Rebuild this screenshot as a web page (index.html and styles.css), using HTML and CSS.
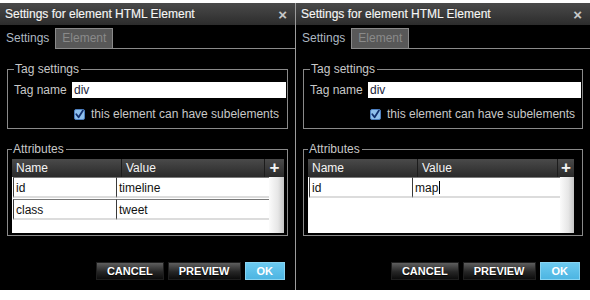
FILE: index.html
```html
<!DOCTYPE html>
<html>
<head>
<meta charset="utf-8">
<link rel="stylesheet" href="styles.css">
</head>
<body>
<div class="screen">
  <div class="dialog">
    <div class="titlebar"><span class="title">Settings for element HTML Element</span><span class="close">×</span></div>
    <div class="tabs"><span class="tab active">Settings</span><span class="tab">Element</span><span class="tab-rest"></span></div>
    <div class="body">
      <fieldset class="group tag-group">
        <legend>Tag settings</legend>
        <div class="field-row"><span class="label">Tag name</span><span class="input">div</span></div>
        <div class="check-row">
          <svg class="checkbox" width="11" height="11" viewBox="0 0 11 11"><rect x="0.5" y="0.5" width="10" height="10" rx="1.5" fill="#8fc0ec" stroke="#4d7fbf"/><path d="M2.3 5.2 L4.6 8.2 L8.9 1.6" fill="none" stroke="#12306e" stroke-width="1.8" stroke-linecap="round" stroke-linejoin="round"/></svg>
          <span>this element can have subelements</span>
        </div>
      </fieldset>
      <fieldset class="group attr-group">
        <legend>Attributes</legend>
        <div class="table">
          <div class="thead"><div class="th th-name">Name</div><div class="th th-value">Value</div><div class="th th-add">+</div></div>
          <div class="tbody">
            <div class="rows">
              <div class="row"><div class="cell cell-name">id</div><div class="cell cell-value">timeline</div></div>
              <div class="row"><div class="cell cell-name">class</div><div class="cell cell-value">tweet</div></div>
            </div>
            <div class="scroll"></div>
          </div>
        </div>
      </fieldset>
      <div class="buttons"><span class="btn">CANCEL</span><span class="btn">PREVIEW</span><span class="btn btn-ok">OK</span></div>
    </div>
  </div>
  <div class="divider"></div>
  <div class="dialog second">
    <div class="titlebar"><span class="title">Settings for element HTML Element</span><span class="close">×</span></div>
    <div class="tabs"><span class="tab active">Settings</span><span class="tab">Element</span><span class="tab-rest"></span></div>
    <div class="body">
      <fieldset class="group tag-group">
        <legend>Tag settings</legend>
        <div class="field-row"><span class="label">Tag name</span><span class="input">div</span></div>
        <div class="check-row">
          <svg class="checkbox" width="11" height="11" viewBox="0 0 11 11"><rect x="0.5" y="0.5" width="10" height="10" rx="1.5" fill="#8fc0ec" stroke="#4d7fbf"/><path d="M2.3 5.2 L4.6 8.2 L8.9 1.6" fill="none" stroke="#12306e" stroke-width="1.8" stroke-linecap="round" stroke-linejoin="round"/></svg>
          <span>this element can have subelements</span>
        </div>
      </fieldset>
      <fieldset class="group attr-group narrow">
        <legend>Attributes</legend>
        <div class="table">
          <div class="thead"><div class="th th-name">Name</div><div class="th th-value">Value</div><div class="th th-add">+</div></div>
          <div class="tbody">
            <div class="rows">
              <div class="row"><div class="cell cell-name">id</div><div class="cell cell-value">map<span class="caret"></span></div></div>
            </div>
            <div class="scroll"></div>
          </div>
        </div>
      </fieldset>
      <div class="buttons"><span class="btn">CANCEL</span><span class="btn">PREVIEW</span><span class="btn btn-ok">OK</span></div>
    </div>
  </div>
</div>
</body>
</html>
```

FILE: styles.css
```css
* { box-sizing: border-box; }
body {
  margin: 0;
  background: #fff;
  font-family: "Liberation Sans", Arial, Helvetica, sans-serif;
  font-size: 12px;
}
.screen {
  display: flex;
  padding-top: 3px;
  height: 290px;
}
.dialog {
  width: 295px;
  background: #000;
  display: flex;
  flex-direction: column;
}
.dialog.second { width: 294px; }
.divider { width: 1px; background: #9c9c9c; }

.titlebar {
  height: 22px;
  background: linear-gradient(#4a4a4a, #2c2c2c);
  display: flex;
  align-items: center;
  justify-content: space-between;
  padding: 0 8px 0 5px;
}
.title {
  color: #f6f6f6;
  -webkit-text-stroke: 0.2px #f6f6f6;
  text-shadow: 0 0 1px rgba(0,0,0,0.7);
}
.close { color: #c8c8c8; font-size: 15px; font-weight: bold; line-height: 1; }

.tabs {
  display: flex;
  height: 24px;
  padding-top: 3px;
}
.tab {
  line-height: 19px;
  padding: 0 6px;
  color: #8a8a8a;
  background: #585858;
  border: 1px solid #8a8a8a;
  margin-left: 1px;
}
.tab.active {
  background: #000;
  border-color: transparent;
  color: #aeb8c2;
  padding: 0 4px 0 5px;
  margin-left: 0;
}
.tab-rest { flex: 1; border-bottom: 1px solid #8a8a8a; }

.body { flex: 1; display: flex; flex-direction: column; }

.group {
  margin: 13px 7px 0 7px;
  border: 1px solid #8a8a8a;
  min-width: 0;
}
.group legend {
  color: #c8c8c8;
  line-height: 14px;
  padding: 0 2px 0 1px;
}
.tag-group { padding: 0 1px 7px 6px; }
.field-row {
  display: flex;
  align-items: center;
  margin-top: 6px;
  height: 16px;
}
.label { width: 58px; color: #c8c8c8; }
.input {
  flex: 1;
  height: 16px;
  background: #fff;
  color: #1a2238;
  line-height: 16px;
  padding-left: 2px;
}
.check-row {
  display: flex;
  align-items: center;
  margin-top: 9px;
  height: 14px;
  padding-left: 60px;
  color: #c8c8c8;
}
.checkbox { margin-right: 6px; }

.attr-group { padding: 3px 3px 2px 4px; }
.attr-group.narrow { padding-right: 8px; }
.thead {
  display: flex;
  height: 18px;
  background: linear-gradient(#4a4a4a, #2a2a2a);
  color: #f4f4f4;
  line-height: 18px;
}
.th { padding-left: 4px; }
.th-name { width: 109px; }
.th-value { flex: 1; border-left: 1px solid #1c1c1c; }
.th-add {
  width: 20px;
  border-left: 1px solid #1c1c1c;
  padding: 0;
  text-align: center;
  font-weight: bold;
  font-size: 17px;
}
.narrow .th-add { width: 17px; }
.tbody {
  display: flex;
  height: 56px;
  background: #fff;
}
.rows { flex: 1; padding-left: 1px; }
.row { display: flex; height: 21px; margin-bottom: 1px; }
.cell {
  border-top: 1px solid #7a7a7a;
  border-left: 1px solid #3a3a3a;
  border-bottom: 2px solid #dcdcdc;
  color: #111;
  line-height: 16px;
  padding: 2px 0 0 2px;
}
.cell-name { width: 103px; }
.cell-value { flex: 1; }
.caret {
  display: inline-block;
  width: 1px;
  height: 13px;
  background: #000;
  vertical-align: -2px;
  margin-left: 1px;
}
.scroll {
  width: 15px;
  background: linear-gradient(90deg, #fbfbfb, #e6e6e6 60%, #c4c4c4);
}
.narrow .scroll { width: 14px; }

.buttons {
  display: flex;
  justify-content: flex-end;
  gap: 4px;
  margin-top: 26px;
  padding-right: 10px;
}
.btn {
  height: 18px;
  line-height: 16px;
  border: 1px solid #1e1e1e;
  background: linear-gradient(#5e5e5e, #262626 55%, #0c0c0c);
  color: #fff;
  font-weight: bold;
  font-size: 11px;
  padding: 0 10px;
  text-shadow: 0 1px 1px #000;
}
.btn-ok {
  background: linear-gradient(#6ccaf0, #4db5e2);
  border-color: #88d4f2;
  padding: 0 11px;
  text-shadow: none;
}
```
